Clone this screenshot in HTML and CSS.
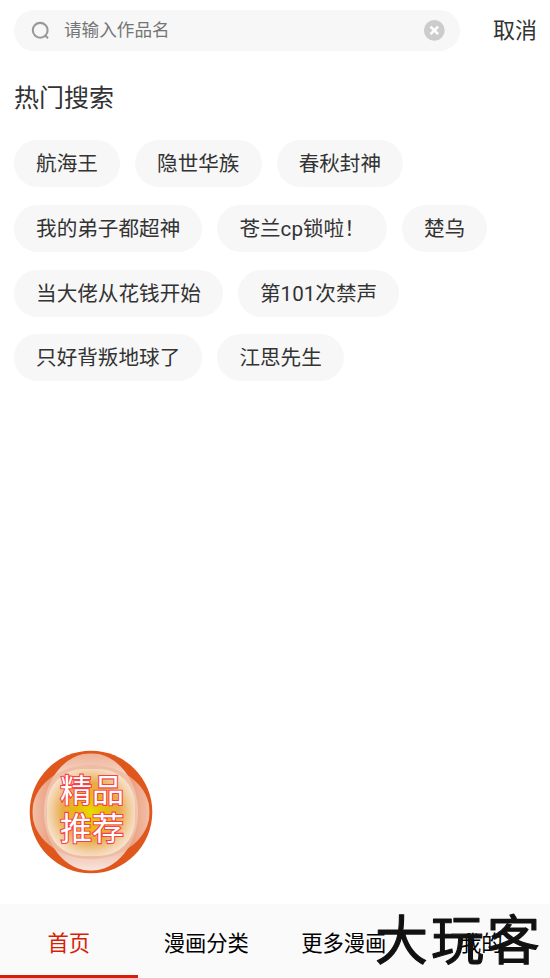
FILE: index.html
```html
<!DOCTYPE html>
<html lang="zh-CN">
<head>
<meta charset="utf-8">
<title>热门搜索</title>
<link rel="stylesheet" href="styles.css">
</head>
<body>
<header class="search">
  <div class="search-box">
    <svg class="search-icon" viewBox="0 0 18 18"><circle cx="9.2" cy="8.3" r="7.4"/><path d="M14 13.2 17 16.2"/></svg>
    <span class="placeholder">请输入作品名</span>
    <svg class="clear" viewBox="0 0 22 22"><circle cx="11.3" cy="10.4" r="10.4"/><path d="M7.5 6.6 15.1 14.2M15.1 6.6 7.5 14.2"/></svg>
  </div>
  <span class="cancel">取消</span>
</header>
<main class="content">
  <h1>热门搜索</h1>
  <div class="tags">
    <div class="row"><span>航海王</span><span>隐世华族</span><span>春秋封神</span></div>
    <div class="row"><span>我的弟子都超神</span><span>苍兰cp锁啦！</span><span>楚乌</span></div>
    <div class="row"><span>当大佬从花钱开始</span><span>第101次禁声</span></div>
    <div class="row"><span>只好背叛地球了</span><span>江思先生</span></div>
  </div>
</main>
<svg class="badge" viewBox="0 0 124 124">
  <defs>
    <radialGradient id="glow" gradientUnits="userSpaceOnUse" cx="62" cy="62" r="52">
      <stop offset="0" stop-color="#e6dc00"/><stop offset=".3" stop-color="#e8b810"/><stop offset=".55" stop-color="#e9ab48"/><stop offset=".78" stop-color="#f3d2aa"/><stop offset="1" stop-color="#fbf1e7"/>
    </radialGradient>
    <linearGradient id="top" x1="0" y1="0" x2="0" y2="1"><stop offset="0" stop-color="#eeb196"/><stop offset=".2" stop-color="#f6d9cb"/><stop offset=".8" stop-color="#eebba5"/><stop offset="1" stop-color="#f9e4dc"/></linearGradient>
    <linearGradient id="side" x1="0" y1="0" x2="1" y2="0"><stop offset="0" stop-color="#f9e2d8"/><stop offset=".16" stop-color="#edb79e"/><stop offset=".84" stop-color="#edb79e"/><stop offset="1" stop-color="#f9e2d8"/></linearGradient>
    <clipPath id="disc"><circle cx="62" cy="62" r="58.7"/></clipPath>
  </defs>
  <circle cx="62" cy="62" r="61.3" fill="#df571d"/>
  <g clip-path="url(#disc)">
    <ellipse cx="62" cy="62" rx="47" ry="58.7" fill="url(#top)"/>
    <ellipse cx="62" cy="62" rx="58.7" ry="47" fill="url(#side)" opacity=".75"/>
  </g>
  <rect x="18" y="19" width="88" height="87" rx="36" fill="url(#glow)"/>
  <g class="badge-text"><text x="31" y="51.5" textLength="64">精品</text><text x="31" y="89.5" textLength="64">推荐</text></g>
</svg>
<nav class="tabs">
  <a class="active">首页</a><a>漫画分类</a><a>更多漫画</a><a>我的</a>
  <svg class="mark" viewBox="0 0 174 74"><text x="5" y="56" textLength="165">大玩客</text></svg>
</nav>
</body>
</html>
```

FILE: styles.css
```css
* { box-sizing: border-box; }
body {
  margin: 0;
  height: 978px;
  display: flex;
  flex-direction: column;
  overflow: hidden;
  background: #fff;
  color: #333;
  font-family: Roboto, "Noto Sans CJK SC", sans-serif;
}
.search {
  display: flex;
  align-items: center;
  justify-content: space-between;
  padding: 10px 13px 0 14px;
}
.search-box {
  display: flex;
  align-items: center;
  width: 446px;
  height: 41px;
  padding: 0 15px 0 17px;
  border-radius: 21px;
  background: #f7f7f7;
}
.search-icon { width: 18px; height: 18px; fill: none; stroke: #999; stroke-width: 2.1; overflow: visible; }
.placeholder { flex: 1; margin-left: 15px; font-size: 17.6px; line-height: 38px; padding-bottom: 2px; color: #757575; }
.clear { width: 22px; height: 22px; fill: #ccc; overflow: visible; }
.clear path { stroke: #fff; stroke-width: 2.6; }
.cancel { font-size: 22px; line-height: 40px; }
.content { flex: 1; padding: 28px 14px 0; }
h1 { margin: 0; font-size: 25px; font-weight: 400; line-height: 40px; }
.tags { display: flex; flex-direction: column; gap: 17.8px; margin-top: 21px; }
.row { display: flex; gap: 15px; }
.row span {
  height: 47px;
  padding: 0 22.1px;
  border-radius: 24px;
  background: #f7f7f7;
  font-size: 20.6px;
  line-height: 48px;
  white-space: nowrap;
}
.badge { flex: none; width: 124px; height: 124px; margin: 0 0 30px 29px; }
.badge-text {
  font-family: "Noto Sans CJK SC", sans-serif;
  font-size: 32px;
  font-weight: 400;
  fill: #fff;
  stroke: #f8404a;
  stroke-width: 2.2px;
  paint-order: stroke;
}
.tabs { position: relative; flex: none; display: flex; height: 74px; background: #fafafa; }
.tabs a {
  flex: 1;
  text-align: center;
  font-size: 21.3px;
  line-height: 80px;
  height: 74px;
  color: #000;
}
.tabs .active { color: #d81e06; border-bottom: 3px solid #d81e06; }
.mark { position: absolute; right: 6px; bottom: 0; width: 174px; height: 74px; }
.mark text {
  font-family: "Noto Sans CJK SC", sans-serif;
  font-size: 53px;
  font-weight: 400;
  fill: #111;
  stroke: #111;
  stroke-width: 1.1px;
  stroke-linejoin: round;
}
```
